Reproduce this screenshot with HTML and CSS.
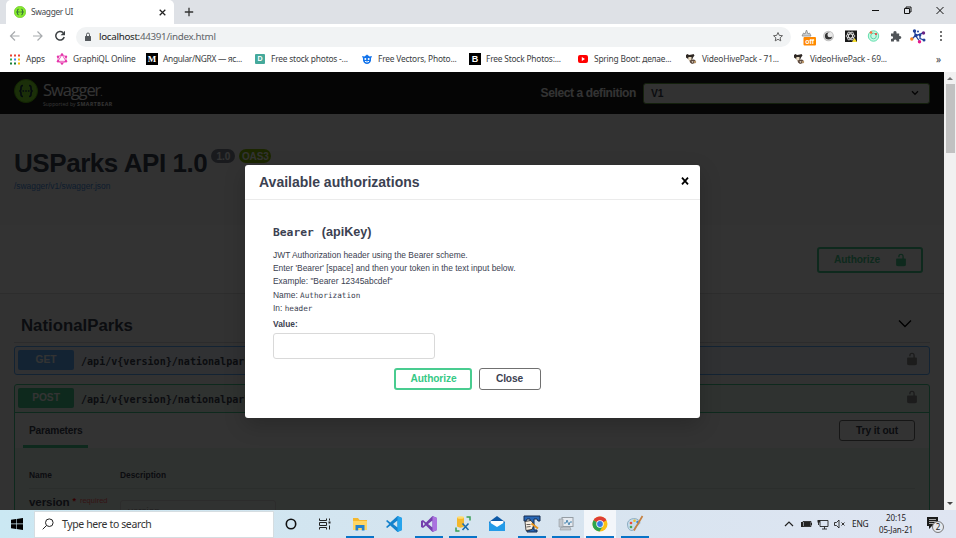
FILE: index.html
```html
<!DOCTYPE html>
<html lang="en">
<head>
<meta charset="utf-8">
<title>Swagger UI</title>
<link rel="stylesheet" href="styles.css">
</head>
<body>
<svg class="defs" width="0" height="0">
  <symbol id="swagger" viewBox="0 0 24 24"><circle cx="12" cy="12" r="11.500" fill="#85ea2d" stroke="#5cb811"/><path d="M9 6.500C6.800 6.500 7 8 7 9.500S6.500 12 5.300 12C6.500 12 7 13 7 14.500S6.800 17.500 9 17.500M15 6.500c2.200 0 2 1.500 2 3s.5 2.500 1.700 2.500c-1.200 0-1.700 1-1.700 2.500s.2 3-2 3" fill="none" stroke="#173647" stroke-width="1.700"/><path d="M8.500 12h1.600m1.100 0h1.600m1.100 0h1.600" stroke="#173647" stroke-width="1.700"/></symbol>
  <symbol id="unlock" viewBox="0 0 20 20"><path d="M15.800 8H14V5.600C14 2.700 12.670 1 10 1 7.200 1 6 2.700 6 5.600V6h2v-.8C8 3.700 8.700 3 10 3s2 .7 2 2.200V8H4c-.6 0-1 .6-1 1.200v7.600c0 .9.700 1.700 1.600 1.900l1.200.3h8.500l1.200-.3c.8-.2 1.500-1 1.500-1.900V9.200c0-.6-.6-1.200-1.200-1.200z"/></symbol>
  <symbol id="cow" viewBox="0 0 12 12"><path d="M1 2l1.500-1L4 2l3-.5L8.500 1l1 1.500L8 4.500 7 7 4.500 7.500 2.500 5.500 1 4.500z" fill="#2e2723"/><path d="M3.500 4h3L6.500 7.500l-2 .5L3 6.500z" fill="#eadcc2"/><path d="M4.500 7.500L7 6.800l2-.3 1.500 1L10 10l-3 1-2-1.500z" fill="#5d493d"/><path d="M6.500 8l2 .5-1 1.500z" fill="#eee5d4"/><circle cx="10" cy="9" r="1.200" fill="#b89568"/></symbol>
</svg>

<header class="browser">
  <div class="tabstrip">
    <div class="tab">
      <svg class="i11"><use href="#swagger"/></svg><span class="tab-title">Swagger UI</span>
      <svg class="tab-close" viewBox="0 0 8 8"><path d="M1.500 1.500l5 5m0-5l-5 5" stroke="#222" stroke-width="1.100"/></svg>
    </div>
    <svg class="newtab" viewBox="0 0 10 10"><path d="M5 .8v8.400M.8 5h8.400" stroke="#333" stroke-width="1.300"/></svg>
    <svg class="winctl" viewBox="0 0 76 16"><path d="M4 8.500h7" stroke="#111"/><path d="M36.500 6.500h5v5h-5zM38 6.500V5h5v5h-1.500" fill="none" stroke="#111"/><path d="M68.500 5l7 7m0-7l-7 7" stroke="#111" stroke-width="1"/></svg>
  </div>
  <div class="toolbar">
    <svg class="nav" viewBox="0 0 60 14"><g fill="none" stroke-width="1.200"><path d="M10.500 7H1.500M6 2.500L1.500 7 6 11.500M24 7h9M28.500 2.500L33 7l-4.500 4.500" stroke="#a8abae"/><path d="M54 3.600A4.300 4.300 0 1 0 55.200 8" stroke="#3c4043" stroke-width="1.500"/></g><path d="M56 1.800v4.400h-4.400z" fill="#3c4043"/></svg>
    <div class="omnibox">
      <svg class="padlock" viewBox="0 0 8 10"><rect x="1" y="4" width="6" height="5" rx=".5" fill="#54585c"/><path d="M2.500 4V2.500a1.500 1.500 0 0 1 3 0V4" fill="none" stroke="#54585c"/></svg>
      <span class="url">localhost:<i>44391/index.html</i></span>
      <svg class="star" viewBox="0 0 12 12"><path d="M6 1.500l1.300 2.900 3.200.3-2.400 2.100.7 3.100L6 8.300l-2.800 1.600.7-3.100L1.500 4.700l3.200-.3z" fill="none" stroke="#555" stroke-width=".9"/></svg>
    </div>
    <svg class="exts" viewBox="0 0 156 20">
      <path d="M2 9l1.500-3L5 7l1.500-4L8 7l1.500-1L11 9z" fill="#ccd0d3" stroke="#888" stroke-width=".8"/><rect x="3.500" y="10" width="12.500" height="8.500" rx="1" fill="#ff8800"/><text x="9.700" y="16.700" class="off">off</text>
      <circle cx="28.500" cy="9" r="5.300" fill="#c0c0c0"/><circle cx="28.500" cy="9" r="4.200" fill="#e8e8e8"/><circle cx="28.500" cy="9" r="3.600" fill="#333"/><circle cx="30" cy="7.700" r="2.500" fill="#e8e8e8"/>
      <rect x="45" y="3.500" width="12" height="11.500" fill="#191919"/><g fill="none" stroke="#eee" stroke-width=".8"><ellipse cx="50.500" cy="9" rx="4.500" ry="2"/><ellipse cx="50.500" cy="9" rx="4.500" ry="2" transform="rotate(60 50.500 9)"/><ellipse cx="50.500" cy="9" rx="4.500" ry="2" transform="rotate(120 50.500 9)"/></g><path d="M54.500 11l2.500 4h-5z" fill="#f5dd32"/>
      <circle cx="73.500" cy="9" r="5.200" fill="#c9f8e5" stroke="#63dfad"/><circle cx="73.500" cy="9" r="2.800" fill="none" stroke="#5cd6a6"/><circle cx="71" cy="5.500" r="1.300" fill="#ff6b3d"/><circle cx="76" cy="7" r="1.100" fill="#ef3b3b"/>
      <path d="M91 6.500h2.500c-.8-3.300 3.800-3.300 3 0h2.700v2.700c2.800-.8 2.800 3.600 0 2.800v2.500h-2.700c.7-2.800-3.300-2.800-2.500 0H91v-2.700c2.800.7 2.800-3.300 0-2.500z" fill="#505458"/>
      <g stroke="#21409a" stroke-width="1.300" fill="none"><path d="M114.500 4l1 4.500 4.500-1 3-2M115.500 8.500l-3 3M120 7.500l0 4 4 1.500M115.500 8.500l3.500 5"/></g><g fill="#21409a"><circle cx="114.500" cy="4" r="1.700"/><circle cx="116" cy="8.500" r="1.700"/><circle cx="120" cy="8" r="1.400"/><circle cx="124" cy="13" r="1.500"/><circle cx="118" cy="4.500" r="1"/></g><circle cx="123.500" cy="6" r="1.700" fill="#6a2384"/><circle cx="111.800" cy="12" r="1.700" fill="#f58220"/><circle cx="119.500" cy="14.800" r="1.700" fill="#e5178a"/>
      <g fill="#444"><circle cx="141" cy="5" r="1"/><circle cx="141" cy="9" r="1"/><circle cx="141" cy="13" r="1"/></g>
    </svg>
  </div>
  <nav class="bookmarks">
    <a><svg viewBox="0 0 12 12"><path d="M1 2.500h2M5 2.500h2M9 2.500h2" stroke="#ea4335" stroke-width="2"/><path d="M1 6.500h2" stroke="#34a853" stroke-width="2"/><path d="M5 6.500h2" stroke="#4285f4" stroke-width="2"/><path d="M9 6.500h2" stroke="#fbbc04" stroke-width="2"/><path d="M1 10.500h2M5 10.500h2" stroke="#188038" stroke-width="2"/><path d="M9 10.500h2" stroke="#fbbc04" stroke-width="2"/></svg><span>Apps</span></a>
    <a><svg viewBox="0 0 12 12"><path d="M6 1.500l4 2.300v4.500L6 10.500 2 8.300V3.800zM6 1.500L2 8.300h8z" fill="none" stroke="#e535ab" stroke-width=".8"/><g fill="#e535ab"><circle cx="6" cy="1.500" r="1.200"/><circle cx="10" cy="3.800" r="1.200"/><circle cx="10" cy="8.300" r="1.200"/><circle cx="6" cy="10.500" r="1.200"/><circle cx="2" cy="8.300" r="1.200"/><circle cx="2" cy="3.800" r="1.200"/></g></svg><span>GraphiQL Online</span></a>
    <a><b class="fav black serif">M</b><span class="tight">Angular/NGRX — яс...</span></a>
    <a><b class="fav teal">D</b><span>Free stock photos -...</span></a>
    <a><svg viewBox="0 0 12 12"><path d="M1 3l2.500.5L6 1.500l2.500 2L11 3l-1 2.500v2C9.500 9.500 8 11 6 11S2.500 9.500 2 7.500v-2z" fill="#1273eb"/><circle cx="4.300" cy="6" r="1" fill="#fff"/><circle cx="7.700" cy="6" r="1" fill="#fff"/><path d="M4 8.300q2 1.500 4 0" fill="none" stroke="#fff"/></svg><span>Free Vectors, Photo...</span></a>
    <a><b class="fav black">B</b><span>Free Stock Photos:...</span></a>
    <a><svg viewBox="0 0 12 12"><rect x="1" y="2" width="10" height="8" rx="2" fill="#f00"/><path d="M4.800 4l3.200 2-3.200 2z" fill="#fff"/></svg><span>Spring Boot: делае...</span></a>
    <a><svg><use href="#cow"/></svg><span>VideoHivePack - 71...</span></a>
    <a><svg><use href="#cow"/></svg><span>VideoHivePack - 69...</span></a>
    <span class="more">»</span>
  </nav>
</header>

<main class="viewport">
  <div class="page">
    <div class="topbar">
      <svg class="logo-mark"><use href="#swagger"/></svg>
      <div class="logo"><span class="logo-name">Swagger<small>.</small></span><span class="logo-sub">Supported by <b>SMARTBEAR</b></span></div>
      <label class="def-label">Select a definition</label>
      <div class="select"><span>V1</span><svg viewBox="0 0 10 8"><path d="M2 2.300l3 3 3-3" fill="none" stroke="#111" stroke-width="1.300"/></svg></div>
    </div>
    <section class="info">
      <div class="title-row"><h1>USParks API 1.0</h1><span class="pill gray">1.0</span><span class="pill green">OAS3</span></div>
      <a class="spec">/swagger/v1/swagger.json</a>
    </section>
    <section class="scheme"><button class="btn auth-main">Authorize <svg><use href="#unlock"/></svg></button></section>
    <section class="ops">
      <div class="tag"><h2>NationalParks</h2><svg viewBox="0 0 14 10"><path d="M1 1.500l6 6 6-6" fill="none" stroke="#000" stroke-width="1.400"/></svg></div>
      <div class="op get"><div class="summary"><span class="method">GET</span><code>/api/v{version}/nationalparks</code><svg><use href="#unlock"/></svg></div></div>
      <div class="op post">
        <div class="summary"><span class="method">POST</span><code>/api/v{version}/nationalparks</code><svg><use href="#unlock"/></svg></div>
        <div class="params-head"><span class="params-tab">Parameters</span><button class="btn try">Try it out</button></div>
        <div class="params">
          <div class="cols"><span>Name</span><span>Description</span></div>
          <div class="param"><div class="pname">version<em>*</em><small>required</small></div><div class="pinput">version</div></div>
        </div>
      </div>
    </section>
    <div class="backdrop"></div>
    <div class="modal">
      <div class="modal-head"><h3>Available authorizations</h3><svg viewBox="0 0 10 10"><path d="M2 1.700l6 6.600m0-6.600L2 8.300" stroke="#000" stroke-width="1.800"/></svg></div>
      <div class="modal-body">
        <h4><code>Bearer</code><span>(apiKey)</span></h4>
        <p>JWT Authorization header using the Bearer scheme.</p>
        <p>Enter 'Bearer' [space] and then your token in the text input below.</p>
        <p>Example: "Bearer 12345abcdef"</p>
        <p>Name: <code>Authorization</code></p>
        <p>In: <code>header</code></p>
        <label>Value:</label>
        <input type="text">
        <div class="actions"><button class="btn authorize">Authorize</button><button class="btn close">Close</button></div>
      </div>
    </div>
  </div>
  <div class="scrollbar"><i class="up"></i><div class="thumb"></div><i class="down"></i></div>
</main>

<footer class="taskbar">
  <div class="start"><svg viewBox="0 0 12 12"><path d="M0 1.700l5-.7v4.600H0zM5.600.9L12 0v5.600H5.600zM0 6.200h5v4.700l-5-.7zM5.600 6.200H12V12l-6.400-.9z"/></svg></div>
  <div class="search"><svg viewBox="0 0 12 12"><circle cx="7.300" cy="4.700" r="3.800" fill="none" stroke="#222"/><path d="M4.500 7.500L.7 11.300" stroke="#222"/></svg><span>Type here to search</span></div>
  <div class="apps">
    <div><svg viewBox="0 0 18 18"><circle cx="9" cy="9" r="4.700" fill="none" stroke="#111" stroke-width="1.600"/></svg></div>
    <div><svg viewBox="0 0 18 18"><path d="M2.500 3.500v2h7v-2M2.500 14.500v-2h7v2M2.500 7.500h7v3h-7zM12.500 3.500v2m0 5v4" fill="none" stroke="#222"/><rect x="11.500" y="6.500" width="2" height="2" fill="#222"/></svg></div>
    <div class="run"><svg viewBox="0 0 18 18"><path d="M2 3h5l1.500 2H16v10H2z" fill="#f5b82e"/><path d="M2 6h14v9H2z" fill="#ffd664"/><path d="M4.500 15.500V10h9v5.500h-2.700V13H7.200v2.500z" fill="#2482cf"/></svg></div>
    <div><svg viewBox="0 0 18 18"><path d="M12.500 1L17 3v12l-4.500 2L5.300 10.500 2.200 13 1 12l3.200-3L1 6l1.200-1 3.100 2.500zM12.500 5.500L8 9l4.500 3.500z" fill="#1482cc" fill-rule="evenodd"/><path d="M12.500 1L17 3v12l-4.500 2z" fill="#26a4ec"/></svg></div>
    <div class="run"><svg viewBox="0 0 18 18"><path d="M12.500 1L17 3v12l-4.500 2L6 10.500 3 13l-2-1V6l2-1 3 2.500zM12.500 5.500L8 9l4.500 3.500zM3 7v4l2-2z" fill="#7440ad" fill-rule="evenodd"/><path d="M12.500 1L17 3v12l-4.500 2z" fill="#aa72df"/></svg></div>
    <div class="run"><svg viewBox="0 0 18 18"><path d="M3 2.500v9c2 1.500 5 1.500 7 0v-9z" fill="#f4b72c"/><ellipse cx="6.500" cy="2.500" rx="3.500" ry="1.300" fill="#ffdb70"/><path d="M12.500 2H16v3.500M2 12.500V16h3.500" fill="none" stroke="#3b9f55" stroke-width="1.500"/><path d="M8.500 8.500l6 6.500M14.500 8.500l-6 6.500" stroke="#1c6dad" stroke-width="1.600"/></svg></div>
    <div><svg viewBox="0 0 18 18"><path d="M1 7l8-6 8 6v9H1z" fill="#0c59a6"/><path d="M2.500 6h13v6h-13z" fill="#fff"/><path d="M1 7l8 5 8-5v9H1z" fill="#249be8"/></svg></div>
    <div class="run"><svg viewBox="0 0 18 18"><path d="M1 1h16v5h-2l-1-2h-3v11h3v2H4v-2h3V4H4L3 6H1z" fill="#2867b6" stroke="#142c50"/><path d="M2 6.500l6-1 3 4-2 5-6 1z" fill="#f7ede0" stroke="#222" stroke-width=".8"/><path d="M3.500 9.500h4M3.500 12l4-.5" stroke="#222" stroke-width=".7"/><path d="M8.500 8.500l6.500 5" stroke="#e8951e" stroke-width="2"/></svg></div>
    <div class="run"><svg viewBox="0 0 18 18"><rect x="5" y="2.500" width="11" height="9" fill="#e5eaf0" stroke="#969da4"/><path d="M7 8h2l1-3 2 5 1-3h2" fill="none" stroke="#518bb3"/><path d="M2 4h4v8H2zM4 12h9l1 3H3z" fill="#c1c6cc" stroke="#959ba1" stroke-width=".6"/></svg></div>
    <div class="run active"><svg viewBox="0 0 18 18"><circle cx="9" cy="9" r="7.500" fill="#fbc116"/><path d="M9 9L2.500 5.250A7.500 7.500 0 0 1 15.500 5.250z" fill="#df3e34"/><path d="M9 9L2.500 5.250A7.500 7.500 0 0 0 8.500 16.500L12 11z" fill="#2ca44f"/><circle cx="9" cy="9" r="3.700" fill="#fff"/><circle cx="9" cy="9" r="2.900" fill="#367be5"/></svg></div>
    <div class="run"><svg viewBox="0 0 18 18"><path d="M1.500 9c0-5 7-7 11-4 3 3 .5 5-2 5.500-2 .5-1 5-4.500 5S1.500 12 1.500 9z" fill="#c5dceb" stroke="#7da1b8" stroke-width=".8"/><circle cx="5" cy="8" r="1.300" fill="#e94b3c"/><circle cx="8.500" cy="5.800" r="1.300" fill="#f3bb23"/><circle cx="5" cy="12" r="1.300" fill="#49a64d"/><circle cx="11.500" cy="7" r="1.200" fill="#3984cd"/><path d="M16.500 1L10 12l-2 3.500" fill="none" stroke="#c58142" stroke-width="1.700"/></svg></div>
  </div>
  <svg class="tray" viewBox="0 0 64 14"><g fill="none" stroke="#222"><path d="M1 9l4-4 4 4" stroke-width="1.200"/><path d="M19 4.500h8v5h-8zM36 3.500h8v6h-8zM40.500 9.500v2.500M38 12h5M34.500 3v5" stroke-width=".9"/><path d="M50.500 5.500h2L55 3v8L52.500 8.500h-2zM57.500 5.500l3 3m0-3l-3 3" stroke-width=".9"/></g><path d="M20 5h6.500v4H20zM17 5h2v5h-2zM27 6h1v2h-1zM33.500 3H36v2.500h-2.500z" fill="#222"/></svg>
  <span class="lang">ENG</span>
  <div class="clock"><span>20:15</span><span>05-Jan-21</span></div>
  <div class="notify"><svg viewBox="0 0 14 14"><path d="M1 1h11v9H6l-3 3v-3H1z" fill="#1b1b1b"/><path d="M3 3.500h7M3 5.500h7M3 7.500h5" stroke="#ccc" stroke-width=".8"/></svg><b>2</b></div>
</footer>
</body>
</html>
```
FILE: styles.css
```css
* { box-sizing: border-box; }
body { margin: 0; width: 956px; height: 538px; overflow: hidden; font-family: "Liberation Sans", Arial, sans-serif; color: #3b4151; }
h1, h2, h3, h4, p { margin: 0; }
.defs { display: none; }
svg { flex: none; display: block; }
button { font-family: inherit; padding: 0; }

.browser { height: 72px; background: #fff; font-family: "Noto Sans", sans-serif; }
.tabstrip { height: 24px; background: #dee1e6; display: flex; align-items: center; padding-left: 6px; }
.tab { width: 168px; height: 24px; background: #fff; border-radius: 5px 5px 0 0; display: flex; align-items: center; padding: 0 7px 0 8px; }
.i11 { width: 12px; height: 12px; }
.tab-title { font-size: 8.400px; margin-left: 5px; flex: 1; color: #45484c; letter-spacing: -.35px; margin-top: -1px; }
.tab-close { width: 9px; height: 9px; }
.newtab { width: 10px; height: 10px; margin-left: 10px; }
.winctl { width: 76px; height: 16px; margin-left: auto; margin-right: 12px; margin-bottom: 4px; }
.toolbar { height: 24px; display: flex; align-items: center; padding-left: 9px; }
.nav { width: 60px; height: 14px; }
.omnibox { width: 715px; height: 20px; margin-left: 7px; margin-top: 1px; border-radius: 10px; background: #f1f3f4; display: flex; align-items: center; padding: 0 7px 0 8px; }
.padlock { width: 8px; height: 10px; }
.url { flex: 1; margin-left: 7px; font-size: 9.800px; color: #222; letter-spacing: -.31px; }
.url i { font-style: normal; color: #5f6368; }
.star { width: 12px; height: 12px; }
.exts { width: 156px; height: 20px; margin-left: 9px; margin-top: 2px; }
.off { font: bold 7px "Liberation Sans", sans-serif; fill: #fff; text-anchor: middle; }
.bookmarks { height: 24px; padding: 0 0 3px 9px; display: grid; grid-template-columns: 47px 90px 108px 107px 108px 108px 108px 108px 142px 1fr; align-items: center; font-size: 8.400px; letter-spacing: -.2px; color: #3c4043; white-space: nowrap; }
.bookmarks a { display: flex; align-items: center; gap: 5px; }
.bookmarks svg, .fav { width: 12px; height: 12px; flex: none; }
.fav { color: #fff; font: bold 9px/12px "Liberation Sans", sans-serif; text-align: center; }
.fav.serif { font-family: "Liberation Serif", serif; }
.tight { letter-spacing: -.32px; }
.black { background: #000; }
.bookmarks .teal { background: #45a99b; width: 10px; height: 10px; line-height: 10px; font-size: 7px; border-radius: 1px; margin: 0 1px; }
.more { font-size: 10px; margin-left: 1px; }

.viewport { height: 438px; display: flex; }
.page { position: relative; width: 944px; height: 438px; overflow: hidden; background: #fafafa; }
.topbar { height: 42px; background: #1b1b1b; display: flex; align-items: center; padding: 0 14px; }
.logo-mark { width: 24px; height: 24px; margin-bottom: 4px; }
.logo { display: flex; flex-direction: column; margin-left: 5px; width: 90px; color: #fff; }
.logo-name { font: 16.500px/22px "Open Sans", sans-serif; letter-spacing: -1.1px; height: 22px; }
.logo-name small { font-size: 9px; }
.logo-sub { font: 5px/7px "Open Sans", sans-serif; letter-spacing: .1px; white-space: nowrap; }
.logo-sub b { font-size: 5.200px; letter-spacing: .5px; }
.def-label { margin-left: auto; font-size: 12px; line-height: 14px; font-weight: bold; color: #fff; letter-spacing: -.38px; }
.select { width: 287px; height: 21px; margin-left: 7px; border: 1px solid #62a03f; border-radius: 3px; background: #f7f7f7; display: flex; align-items: center; justify-content: space-between; padding: 0 9px 0 7px; font-size: 10.300px; font-weight: bold; }
.select svg { width: 10px; height: 8px; }
.info { height: 111px; padding: 34px 14px 0; }
.title-row { display: flex; align-items: flex-start; height: 31px; }
h1 { font-size: 26px; line-height: 31px; letter-spacing: -.44px; white-space: nowrap; }
.pill { height: 14px; border-radius: 7px; font-size: 10px; line-height: 15px; font-weight: bold; color: #fff; text-align: center; margin-top: 1px; letter-spacing: -.1px; }
.gray { width: 24px; background: #7d8492; margin-left: 4px; }
.green { width: 32px; background: #89bf04; margin-left: 4px; }
.spec { display: block; color: #4990e2; font-size: 8.400px; line-height: 12px; margin-top: 1px; }
.scheme { height: 69px; background: #fff; border-bottom: 1px solid #e2e2e2; display: flex; justify-content: flex-end; padding: 22px 21px 0 0; }
.btn { display: flex; align-items: center; justify-content: center; border: 1.500px solid #707070; border-radius: 3px; background: transparent; font-weight: bold; font-size: 10.200px; letter-spacing: -.1px; color: #3b4151; }
.auth-main { width: 106px; height: 26px; color: #49cc90; border-color: #49cc90; gap: 14px; padding: 0 0 1px 2px; border-width: 2px; }
.auth-main svg { width: 14px; height: 14px; fill: #49cc90; }
.ops { padding: 16px 14px 0; }
.tag { height: 33px; border-bottom: 1px solid #d5d7dc; display: flex; align-items: center; justify-content: space-between; padding: 0 18px 2px 7px; }
h2 { font-size: 16.800px; margin-top: 1px; }
.tag svg { width: 14px; height: 10px; margin-bottom: 2px; }
.op { border: 1px solid; border-radius: 3px; margin-top: 3px; }
.get { height: 29px; border-color: #61affe; background: #edf5fd; }
.post { height: 160px; border-color: #49cc90; background: #ebf7f1; margin-top: 9px; }
.summary { height: 27px; display: flex; align-items: center; padding: 0 10px 1px 3px; }
.method { width: 56px; height: 20px; border-radius: 2px; background: #61affe; color: #fff; font-size: 10.200px; font-weight: bold; line-height: 20px; text-align: center; }
.post .method { background: #49cc90; }
.summary code { font: bold 10.060px "DejaVu Sans Mono", monospace; margin-left: 7px; padding-top: 2px; flex: 1; }
.summary svg { width: 14px; height: 14px; fill: #8b8b8b; margin-bottom: 2px; }
.post .summary { border-bottom: 1px solid #49cc90; height: 28px; }
.params-head { height: 35px; background: #fdfdfd; display: flex; justify-content: space-between; align-items: center; padding: 0 14px 0 8px; }
.params-tab { width: 65px; height: 34px; border-bottom: 3px solid #49cc90; font-size: 10.200px; letter-spacing: -.2px; font-weight: bold; line-height: 34px; padding-left: 6px; }
.try { width: 76px; height: 21px; }
.params { padding: 14px 14px 0; }
.cols { display: flex; height: 27px; align-items: center; border-bottom: 1px solid #d8e4dd; font-size: 8.400px; font-weight: bold; }
.cols span:first-child { width: 91px; }
.param { display: flex; padding-top: 5px; }
.pname { width: 91px; font-size: 11.600px; letter-spacing: -.1px; font-weight: bold; line-height: 14px; white-space: nowrap; }
.pname em { color: #f00; font-style: normal; font-size: 9px; margin: 0 4px 0 3px; vertical-align: 2px; }
.pname small { color: #f66; font-size: 7.500px; letter-spacing: 0; font-weight: normal; vertical-align: 3px; }
.pinput { width: 156px; margin-top: 6px; height: 23px; border: 1px solid #d9d9d9; border-radius: 3px; background: #f1f7f4; color: #999; font-size: 9.800px; line-height: 12px; padding: 4px 7px; }
.backdrop { position: absolute; inset: 0; background: rgba(0, 0, 0, .8); }
.modal { position: absolute; left: 245px; top: 93px; width: 455px; height: 253px; border-radius: 3px; background: #fff; box-shadow: 0 7px 21px rgba(0, 0, 0, .2); }
.modal-head { height: 35px; display: flex; align-items: center; justify-content: space-between; padding: 0 10px 0 14px; border-bottom: 1px solid #ebebeb; }
h3 { font-size: 14px; margin-top: -1px; }
.modal-head svg { width: 10px; height: 10px; margin-top: -2px; }
.modal-body { padding: 24px 28px 0; font-size: 8.420px; line-height: 13.400px; }
h4 { height: 24.600px; display: flex; align-items: flex-start; gap: 8px; font-size: 12.600px; line-height: 16px; }
h4 code { font: bold 11.300px/17px "DejaVu Sans Mono", monospace; }
.modal-body p { height: 13.400px; white-space: nowrap; }
p code { font: 7.700px/13px "DejaVu Sans Mono", monospace; }
.modal-body label { display: block; font-weight: bold; line-height: 14px; height: 14.400px; margin-top: 1px; }
.modal-body input { display: block; width: 162px; height: 26px; margin-top: 2px; border: 1px solid #d9d9d9; border-radius: 3px; background: #fff; }
.actions { display: flex; justify-content: center; gap: 7px; margin-top: 9px; padding-right: 11px; }
.actions .btn { height: 22px; }
.actions .authorize { width: 78px; color: #36c986; border: 2px solid #49cc90; padding-left: 2px; }
.close { width: 62px; }
.scrollbar { width: 12px; background: #f1f1f1; display: flex; flex-direction: column; align-items: center; padding: 5px 1px; }
.scrollbar i { border: 3px solid transparent; width: 0; height: 0; flex: none; }
.scrollbar .up { border-top: 0; border-bottom-color: #777; margin-bottom: 4px; }
.scrollbar .down { border-bottom: 0; border-top-color: #444; margin-top: auto; }
.thumb { width: 9px; height: 69px; background: #c1c1c1; }

.taskbar { height: 28px; background: linear-gradient(90deg, #cbe8f3 0%, #d5e4ef 45%, #dfe5f2 100%); display: flex; align-items: center; font-family: "Noto Sans", sans-serif; color: #222; }
.start { width: 34px; display: flex; justify-content: center; }
.start svg { width: 12px; height: 12px; }
.search { width: 240px; height: 27px; background: #fff; border: 1px solid #d5dde1; display: flex; align-items: center; padding-left: 7px; font-size: 10.500px; color: #333; }
.search svg { width: 12px; height: 12px; margin-right: 8px; }
.search span { letter-spacing: -.38px; }
.apps { display: flex; height: 28px; }
.apps div { width: 34.350px; height: 28px; display: flex; align-items: center; justify-content: center; background-repeat: no-repeat; background-position: center bottom; }
.apps svg { width: 18px; height: 18px; }
.apps .run { background-image: linear-gradient(#0874c8, #0874c8); background-size: 28px 2px; }
.apps .active { background-color: #f3f6fa; background-clip: content-box; padding: 0 1px; }
.tray { width: 64px; height: 14px; margin-left: auto; margin-right: 4px; }
.lang { font-size: 8.400px; width: 23px; letter-spacing: -.2px; margin-top: -1px; }
.clock { width: 42px; font-size: 8px; line-height: 12px; display: flex; flex-direction: column; align-items: center; letter-spacing: -.1px; margin-top: -1px; }
.notify { position: relative; width: 39px; height: 18px; padding: 1px 0 0 9px; }
.notify svg { width: 14px; height: 14px; }
.notify b { position: absolute; left: 15px; top: 6px; width: 12px; height: 12px; border: 1px solid #777; border-radius: 50%; background: #e6e9ef; font-size: 8px; line-height: 10px; text-align: center; font-weight: normal; }
```
